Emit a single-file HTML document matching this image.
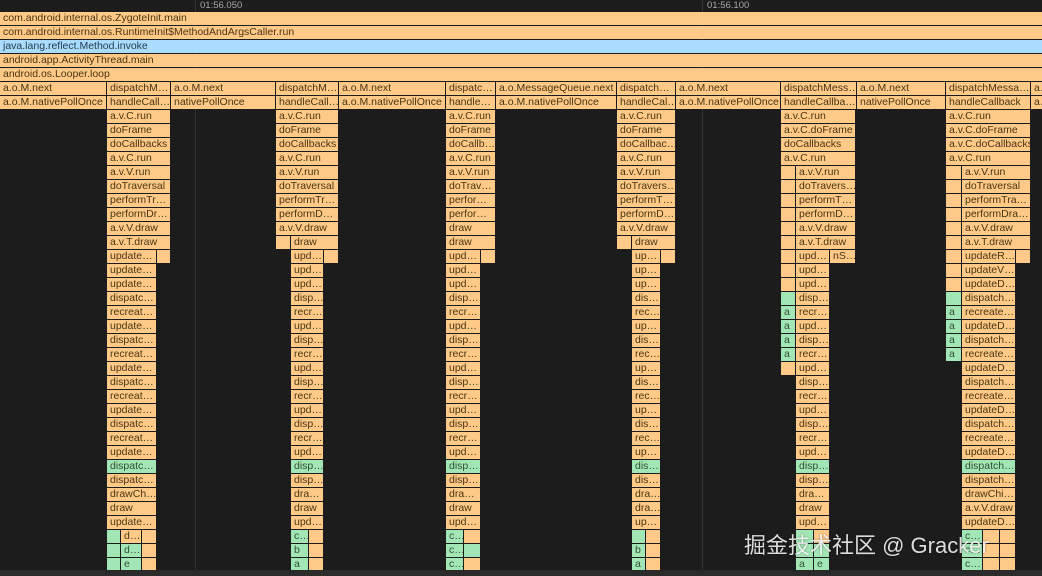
<!DOCTYPE html>
<html><head><meta charset="utf-8"><style>
html,body{margin:0;padding:0;background:#1c1c1c;width:1042px;height:576px;overflow:hidden;position:relative}
.b{position:absolute;height:13px;background:#ffc987;font:10.5px "Liberation Sans",sans-serif;color:#4a3410;line-height:13px;padding-left:3px;box-sizing:border-box;overflow:hidden;white-space:nowrap;z-index:2}
.g{background:#a3e6b5;color:#2f4f30}
.l{position:absolute;top:0;width:1px;height:570px;background:#343434;z-index:1}
.t{position:absolute;top:0;font:9.5px "Liberation Sans",sans-serif;color:#a8a8a8;line-height:11px}
.wm{position:absolute;left:744px;top:528px;font:22px "Liberation Sans","Noto Sans CJK SC",sans-serif;color:rgba(255,255,255,.85);z-index:5;text-shadow:0 0 2px rgba(0,0,0,.4)}
.bot{position:absolute;left:0;top:570px;width:1042px;height:6px;background:#2b2b2b;z-index:4}
</style></head><body>
<div class="l" style="left:195px"></div><div class="l" style="left:702px"></div>
<div class="t" style="left:200px">01:56.050</div><div class="t" style="left:707px">01:56.100</div>
<div class="b" style="left:0;top:12px;width:1042px">com.android.internal.os.ZygoteInit.main</div>
<div class="b" style="left:0;top:26px;width:1042px">com.android.internal.os.RuntimeInit$MethodAndArgsCaller.run</div>
<div class="b" style="left:0;top:40px;width:1042px;background:#a9dcfd;color:#1f3a50">java.lang.reflect.Method.invoke</div>
<div class="b" style="left:0;top:54px;width:1042px">android.app.ActivityThread.main</div>
<div class="b" style="left:0;top:68px;width:1042px">android.os.Looper.loop</div>
<!-- row5 -->
<div class="b" style="left:0;top:82px;width:106px">a.o.M.next</div>
<div class="b" style="left:107px;top:82px;width:63px">dispatchM…</div>
<div class="b" style="left:171px;top:82px;width:104px">a.o.M.next</div>
<div class="b" style="left:276px;top:82px;width:62px">dispatchM…</div>
<div class="b" style="left:339px;top:82px;width:106px">a.o.M.next</div>
<div class="b" style="left:446px;top:82px;width:49px">dispatc…</div>
<div class="b" style="left:496px;top:82px;width:120px">a.o.MessageQueue.next</div>
<div class="b" style="left:617px;top:82px;width:58px">dispatch…</div>
<div class="b" style="left:676px;top:82px;width:104px">a.o.M.next</div>
<div class="b" style="left:781px;top:82px;width:75px">dispatchMess…</div>
<div class="b" style="left:857px;top:82px;width:88px">a.o.M.next</div>
<div class="b" style="left:946px;top:82px;width:84px">dispatchMessa…</div>
<div class="b" style="left:1031px;top:82px;width:11px">a…</div>
<!-- row6 -->
<div class="b" style="left:0;top:96px;width:106px">a.o.M.nativePollOnce</div>
<div class="b" style="left:107px;top:96px;width:63px">handleCall…</div>
<div class="b" style="left:171px;top:96px;width:104px">nativePollOnce</div>
<div class="b" style="left:276px;top:96px;width:62px">handleCall…</div>
<div class="b" style="left:339px;top:96px;width:106px">a.o.M.nativePollOnce</div>
<div class="b" style="left:446px;top:96px;width:49px">handle…</div>
<div class="b" style="left:496px;top:96px;width:120px">a.o.M.nativePollOnce</div>
<div class="b" style="left:617px;top:96px;width:58px">handleCal…</div>
<div class="b" style="left:676px;top:96px;width:104px">a.o.M.nativePollOnce</div>
<div class="b" style="left:781px;top:96px;width:75px">handleCallba…</div>
<div class="b" style="left:857px;top:96px;width:88px">nativePollOnce</div>
<div class="b" style="left:946px;top:96px;width:84px">handleCallback</div>
<div class="b" style="left:1031px;top:96px;width:11px">a…</div>

<!-- Column A -->
<div class="b" style="left:107px;top:110px;width:63px">a.v.C.run</div>
<div class="b" style="left:107px;top:124px;width:63px">doFrame</div>
<div class="b" style="left:107px;top:138px;width:63px">doCallbacks</div>
<div class="b" style="left:107px;top:152px;width:63px">a.v.C.run</div>
<div class="b" style="left:107px;top:166px;width:63px">a.v.V.run</div>
<div class="b" style="left:107px;top:180px;width:63px">doTraversal</div>
<div class="b" style="left:107px;top:194px;width:63px">performTr…</div>
<div class="b" style="left:107px;top:208px;width:63px">performDr…</div>
<div class="b" style="left:107px;top:222px;width:63px">a.v.V.draw</div>
<div class="b" style="left:107px;top:236px;width:63px">a.v.T.draw</div>
<div class="b" style="left:107px;top:250px;width:49px">update…</div><div class="b" style="left:157px;top:250px;width:13px"></div>
<div class="b" style="left:107px;top:264px;width:49px">update…</div>
<div class="b" style="left:107px;top:278px;width:49px">update…</div>
<div class="b" style="left:107px;top:292px;width:49px">dispatc…</div>
<div class="b" style="left:107px;top:306px;width:49px">recreat…</div>
<div class="b" style="left:107px;top:320px;width:49px">update…</div>
<div class="b" style="left:107px;top:334px;width:49px">dispatc…</div>
<div class="b" style="left:107px;top:348px;width:49px">recreat…</div>
<div class="b" style="left:107px;top:362px;width:49px">update…</div>
<div class="b" style="left:107px;top:376px;width:49px">dispatc…</div>
<div class="b" style="left:107px;top:390px;width:49px">recreat…</div>
<div class="b" style="left:107px;top:404px;width:49px">update…</div>
<div class="b" style="left:107px;top:418px;width:49px">dispatc…</div>
<div class="b" style="left:107px;top:432px;width:49px">recreat…</div>
<div class="b" style="left:107px;top:446px;width:49px">update…</div>
<div class="b g" style="left:107px;top:460px;width:49px">dispatc…</div>
<div class="b" style="left:107px;top:474px;width:49px">dispatc…</div>
<div class="b" style="left:107px;top:488px;width:49px">drawCh…</div>
<div class="b" style="left:107px;top:502px;width:49px">draw</div>
<div class="b" style="left:107px;top:516px;width:49px">update…</div>
<div class="b g" style="left:107px;top:530px;width:13px"></div><div class="b" style="left:121px;top:530px;width:20px">d…</div><div class="b" style="left:142px;top:530px;width:14px"></div>
<div class="b g" style="left:107px;top:544px;width:13px"></div><div class="b g" style="left:121px;top:544px;width:20px">d…</div><div class="b" style="left:142px;top:544px;width:14px"></div>
<div class="b g" style="left:107px;top:558px;width:13px"></div><div class="b g" style="left:121px;top:558px;width:20px">e</div><div class="b" style="left:142px;top:558px;width:14px"></div>

<!-- Column B -->
<div class="b" style="left:276px;top:110px;width:62px">a.v.C.run</div>
<div class="b" style="left:276px;top:124px;width:62px">doFrame</div>
<div class="b" style="left:276px;top:138px;width:62px">doCallbacks</div>
<div class="b" style="left:276px;top:152px;width:62px">a.v.C.run</div>
<div class="b" style="left:276px;top:166px;width:62px">a.v.V.run</div>
<div class="b" style="left:276px;top:180px;width:62px">doTraversal</div>
<div class="b" style="left:276px;top:194px;width:62px">performTr…</div>
<div class="b" style="left:276px;top:208px;width:62px">performD…</div>
<div class="b" style="left:276px;top:222px;width:62px">a.v.V.draw</div>
<div class="b" style="left:276px;top:236px;width:14px"></div><div class="b" style="left:291px;top:236px;width:47px">draw</div>
<div class="b" style="left:291px;top:250px;width:32px">upd…</div><div class="b" style="left:324px;top:250px;width:14px"></div>
<div class="b" style="left:291px;top:264px;width:32px">upd…</div>
<div class="b" style="left:291px;top:278px;width:32px">upd…</div>
<div class="b" style="left:291px;top:292px;width:32px">disp…</div>
<div class="b" style="left:291px;top:306px;width:32px">recr…</div>
<div class="b" style="left:291px;top:320px;width:32px">upd…</div>
<div class="b" style="left:291px;top:334px;width:32px">disp…</div>
<div class="b" style="left:291px;top:348px;width:32px">recr…</div>
<div class="b" style="left:291px;top:362px;width:32px">upd…</div>
<div class="b" style="left:291px;top:376px;width:32px">disp…</div>
<div class="b" style="left:291px;top:390px;width:32px">recr…</div>
<div class="b" style="left:291px;top:404px;width:32px">upd…</div>
<div class="b" style="left:291px;top:418px;width:32px">disp…</div>
<div class="b" style="left:291px;top:432px;width:32px">recr…</div>
<div class="b" style="left:291px;top:446px;width:32px">upd…</div>
<div class="b g" style="left:291px;top:460px;width:32px">disp…</div>
<div class="b" style="left:291px;top:474px;width:32px">disp…</div>
<div class="b" style="left:291px;top:488px;width:32px">dra…</div>
<div class="b" style="left:291px;top:502px;width:32px">draw</div>
<div class="b" style="left:291px;top:516px;width:32px">upd…</div>
<div class="b g" style="left:291px;top:530px;width:17px">c…</div><div class="b" style="left:309px;top:530px;width:14px"></div>
<div class="b g" style="left:291px;top:544px;width:17px">b</div><div class="b" style="left:309px;top:544px;width:14px"></div>
<div class="b g" style="left:291px;top:558px;width:17px">a</div><div class="b" style="left:309px;top:558px;width:14px"></div>

<!-- Column C -->
<div class="b" style="left:446px;top:110px;width:49px">a.v.C.run</div>
<div class="b" style="left:446px;top:124px;width:49px">doFrame</div>
<div class="b" style="left:446px;top:138px;width:49px">doCallb…</div>
<div class="b" style="left:446px;top:152px;width:49px">a.v.C.run</div>
<div class="b" style="left:446px;top:166px;width:49px">a.v.V.run</div>
<div class="b" style="left:446px;top:180px;width:49px">doTrav…</div>
<div class="b" style="left:446px;top:194px;width:49px">perfor…</div>
<div class="b" style="left:446px;top:208px;width:49px">perfor…</div>
<div class="b" style="left:446px;top:222px;width:49px">draw</div>
<div class="b" style="left:446px;top:236px;width:49px">draw</div>
<div class="b" style="left:446px;top:250px;width:34px">upd…</div><div class="b" style="left:481px;top:250px;width:14px"></div>
<div class="b" style="left:446px;top:264px;width:34px">upd…</div>
<div class="b" style="left:446px;top:278px;width:34px">upd…</div>
<div class="b" style="left:446px;top:292px;width:34px">disp…</div>
<div class="b" style="left:446px;top:306px;width:34px">recr…</div>
<div class="b" style="left:446px;top:320px;width:34px">upd…</div>
<div class="b" style="left:446px;top:334px;width:34px">disp…</div>
<div class="b" style="left:446px;top:348px;width:34px">recr…</div>
<div class="b" style="left:446px;top:362px;width:34px">upd…</div>
<div class="b" style="left:446px;top:376px;width:34px">disp…</div>
<div class="b" style="left:446px;top:390px;width:34px">recr…</div>
<div class="b" style="left:446px;top:404px;width:34px">upd…</div>
<div class="b" style="left:446px;top:418px;width:34px">disp…</div>
<div class="b" style="left:446px;top:432px;width:34px">recr…</div>
<div class="b" style="left:446px;top:446px;width:34px">upd…</div>
<div class="b g" style="left:446px;top:460px;width:34px">disp…</div>
<div class="b" style="left:446px;top:474px;width:34px">disp…</div>
<div class="b" style="left:446px;top:488px;width:34px">dra…</div>
<div class="b" style="left:446px;top:502px;width:34px">draw</div>
<div class="b" style="left:446px;top:516px;width:34px">upd…</div>
<div class="b g" style="left:446px;top:530px;width:17px">c…</div><div class="b" style="left:464px;top:530px;width:16px"></div>
<div class="b g" style="left:446px;top:544px;width:17px">c…</div><div class="b g" style="left:464px;top:544px;width:16px"></div>
<div class="b g" style="left:446px;top:558px;width:17px">c…</div><div class="b" style="left:464px;top:558px;width:16px"></div>

<!-- Column D -->
<div class="b" style="left:617px;top:110px;width:58px">a.v.C.run</div>
<div class="b" style="left:617px;top:124px;width:58px">doFrame</div>
<div class="b" style="left:617px;top:138px;width:58px">doCallbac…</div>
<div class="b" style="left:617px;top:152px;width:58px">a.v.C.run</div>
<div class="b" style="left:617px;top:166px;width:58px">a.v.V.run</div>
<div class="b" style="left:617px;top:180px;width:58px">doTravers…</div>
<div class="b" style="left:617px;top:194px;width:58px">performT…</div>
<div class="b" style="left:617px;top:208px;width:58px">performD…</div>
<div class="b" style="left:617px;top:222px;width:58px">a.v.V.draw</div>
<div class="b" style="left:617px;top:236px;width:14px"></div><div class="b" style="left:632px;top:236px;width:43px">draw</div>
<div class="b" style="left:632px;top:250px;width:28px">up…</div><div class="b" style="left:661px;top:250px;width:14px"></div>
<div class="b" style="left:632px;top:264px;width:28px">up…</div>
<div class="b" style="left:632px;top:278px;width:28px">up…</div>
<div class="b" style="left:632px;top:292px;width:28px">dis…</div>
<div class="b" style="left:632px;top:306px;width:28px">rec…</div>
<div class="b" style="left:632px;top:320px;width:28px">up…</div>
<div class="b" style="left:632px;top:334px;width:28px">dis…</div>
<div class="b" style="left:632px;top:348px;width:28px">rec…</div>
<div class="b" style="left:632px;top:362px;width:28px">up…</div>
<div class="b" style="left:632px;top:376px;width:28px">dis…</div>
<div class="b" style="left:632px;top:390px;width:28px">rec…</div>
<div class="b" style="left:632px;top:404px;width:28px">up…</div>
<div class="b" style="left:632px;top:418px;width:28px">dis…</div>
<div class="b" style="left:632px;top:432px;width:28px">rec…</div>
<div class="b" style="left:632px;top:446px;width:28px">up…</div>
<div class="b g" style="left:632px;top:460px;width:28px">dis…</div>
<div class="b" style="left:632px;top:474px;width:28px">dis…</div>
<div class="b" style="left:632px;top:488px;width:28px">dra…</div>
<div class="b" style="left:632px;top:502px;width:28px">dra…</div>
<div class="b" style="left:632px;top:516px;width:28px">up…</div>
<div class="b g" style="left:632px;top:530px;width:13px"></div><div class="b" style="left:646px;top:530px;width:14px"></div>
<div class="b g" style="left:632px;top:544px;width:13px">b</div><div class="b" style="left:646px;top:544px;width:14px"></div>
<div class="b g" style="left:632px;top:558px;width:13px">a</div><div class="b" style="left:646px;top:558px;width:14px"></div>

<!-- Column E -->
<div class="b" style="left:781px;top:110px;width:74px">a.v.C.run</div>
<div class="b" style="left:781px;top:124px;width:74px">a.v.C.doFrame</div>
<div class="b" style="left:781px;top:138px;width:74px">doCallbacks</div>
<div class="b" style="left:781px;top:152px;width:74px">a.v.C.run</div>
<div class="b" style="left:781px;top:166px;width:14px"></div><div class="b" style="left:796px;top:166px;width:59px">a.v.V.run</div>
<div class="b" style="left:781px;top:180px;width:14px"></div><div class="b" style="left:796px;top:180px;width:59px">doTravers…</div>
<div class="b" style="left:781px;top:194px;width:14px"></div><div class="b" style="left:796px;top:194px;width:59px">performT…</div>
<div class="b" style="left:781px;top:208px;width:14px"></div><div class="b" style="left:796px;top:208px;width:59px">performD…</div>
<div class="b" style="left:781px;top:222px;width:14px"></div><div class="b" style="left:796px;top:222px;width:59px">a.v.V.draw</div>
<div class="b" style="left:781px;top:236px;width:14px"></div><div class="b" style="left:796px;top:236px;width:59px">a.v.T.draw</div>
<div class="b" style="left:781px;top:250px;width:14px"></div><div class="b" style="left:796px;top:250px;width:33px">upd…</div><div class="b" style="left:830px;top:250px;width:25px">nS…</div>
<div class="b" style="left:781px;top:264px;width:14px"></div><div class="b" style="left:796px;top:264px;width:33px">upd…</div>
<div class="b" style="left:781px;top:278px;width:14px"></div><div class="b" style="left:796px;top:278px;width:33px">upd…</div>
<div class="b g" style="left:781px;top:292px;width:14px"></div><div class="b" style="left:796px;top:292px;width:33px">disp…</div>
<div class="b g" style="left:781px;top:306px;width:14px">a</div><div class="b" style="left:796px;top:306px;width:33px">recr…</div>
<div class="b g" style="left:781px;top:320px;width:14px">a</div><div class="b" style="left:796px;top:320px;width:33px">upd…</div>
<div class="b g" style="left:781px;top:334px;width:14px">a</div><div class="b" style="left:796px;top:334px;width:33px">disp…</div>
<div class="b g" style="left:781px;top:348px;width:14px">a</div><div class="b" style="left:796px;top:348px;width:33px">recr…</div>
<div class="b" style="left:781px;top:362px;width:14px"></div><div class="b" style="left:796px;top:362px;width:33px">upd…</div>
<div class="b" style="left:796px;top:376px;width:33px">disp…</div>
<div class="b" style="left:796px;top:390px;width:33px">recr…</div>
<div class="b" style="left:796px;top:404px;width:33px">upd…</div>
<div class="b" style="left:796px;top:418px;width:33px">disp…</div>
<div class="b" style="left:796px;top:432px;width:33px">recr…</div>
<div class="b" style="left:796px;top:446px;width:33px">upd…</div>
<div class="b g" style="left:796px;top:460px;width:33px">disp…</div>
<div class="b" style="left:796px;top:474px;width:33px">disp…</div>
<div class="b" style="left:796px;top:488px;width:33px">dra…</div>
<div class="b" style="left:796px;top:502px;width:33px">draw</div>
<div class="b" style="left:796px;top:516px;width:33px">upd…</div>
<div class="b g" style="left:796px;top:530px;width:17px"></div><div class="b" style="left:814px;top:530px;width:15px"></div>
<div class="b g" style="left:796px;top:544px;width:17px"></div><div class="b g" style="left:814px;top:544px;width:15px"></div>
<div class="b g" style="left:796px;top:558px;width:17px">a</div><div class="b g" style="left:814px;top:558px;width:15px">e</div>

<!-- Column F -->
<div class="b" style="left:946px;top:110px;width:84px">a.v.C.run</div>
<div class="b" style="left:946px;top:124px;width:84px">a.v.C.doFrame</div>
<div class="b" style="left:946px;top:138px;width:84px">a.v.C.doCallbacks</div>
<div class="b" style="left:946px;top:152px;width:84px">a.v.C.run</div>
<div class="b" style="left:946px;top:166px;width:15px"></div><div class="b" style="left:962px;top:166px;width:68px">a.v.V.run</div>
<div class="b" style="left:946px;top:180px;width:15px"></div><div class="b" style="left:962px;top:180px;width:68px">doTraversal</div>
<div class="b" style="left:946px;top:194px;width:15px"></div><div class="b" style="left:962px;top:194px;width:68px">performTra…</div>
<div class="b" style="left:946px;top:208px;width:15px"></div><div class="b" style="left:962px;top:208px;width:68px">performDra…</div>
<div class="b" style="left:946px;top:222px;width:15px"></div><div class="b" style="left:962px;top:222px;width:68px">a.v.V.draw</div>
<div class="b" style="left:946px;top:236px;width:15px"></div><div class="b" style="left:962px;top:236px;width:68px">a.v.T.draw</div>
<div class="b" style="left:946px;top:250px;width:15px"></div><div class="b" style="left:962px;top:250px;width:53px">updateR…</div><div class="b" style="left:1016px;top:250px;width:14px"></div>
<div class="b" style="left:946px;top:264px;width:15px"></div><div class="b" style="left:962px;top:264px;width:53px">updateV…</div>
<div class="b" style="left:946px;top:278px;width:15px"></div><div class="b" style="left:962px;top:278px;width:53px">updateD…</div>
<div class="b g" style="left:946px;top:292px;width:15px"></div><div class="b" style="left:962px;top:292px;width:53px">dispatch…</div>
<div class="b g" style="left:946px;top:306px;width:15px">a</div><div class="b" style="left:962px;top:306px;width:53px">recreate…</div>
<div class="b g" style="left:946px;top:320px;width:15px">a</div><div class="b" style="left:962px;top:320px;width:53px">updateD…</div>
<div class="b g" style="left:946px;top:334px;width:15px">a</div><div class="b" style="left:962px;top:334px;width:53px">dispatch…</div>
<div class="b g" style="left:946px;top:348px;width:15px">a</div><div class="b" style="left:962px;top:348px;width:53px">recreate…</div>
<div class="b" style="left:962px;top:362px;width:53px">updateD…</div>
<div class="b" style="left:962px;top:376px;width:53px">dispatch…</div>
<div class="b" style="left:962px;top:390px;width:53px">recreate…</div>
<div class="b" style="left:962px;top:404px;width:53px">updateD…</div>
<div class="b" style="left:962px;top:418px;width:53px">dispatch…</div>
<div class="b" style="left:962px;top:432px;width:53px">recreate…</div>
<div class="b" style="left:962px;top:446px;width:53px">updateD…</div>
<div class="b g" style="left:962px;top:460px;width:53px">dispatch…</div>
<div class="b" style="left:962px;top:474px;width:53px">dispatch…</div>
<div class="b" style="left:962px;top:488px;width:53px">drawChi…</div>
<div class="b" style="left:962px;top:502px;width:53px">a.v.V.draw</div>
<div class="b" style="left:962px;top:516px;width:53px">updateD…</div>
<div class="b g" style="left:962px;top:530px;width:20px">c…</div><div class="b" style="left:983px;top:530px;width:16px"></div><div class="b" style="left:1000px;top:530px;width:15px"></div>
<div class="b g" style="left:962px;top:544px;width:20px">c…</div><div class="b" style="left:983px;top:544px;width:16px"></div><div class="b" style="left:1000px;top:544px;width:15px"></div>
<div class="b g" style="left:962px;top:558px;width:20px">c…</div><div class="b" style="left:983px;top:558px;width:16px"></div><div class="b" style="left:1000px;top:558px;width:15px"></div>

<div class="wm">掘金技术社区 @ Gracker</div>
<div class="bot"></div>
</body></html>
